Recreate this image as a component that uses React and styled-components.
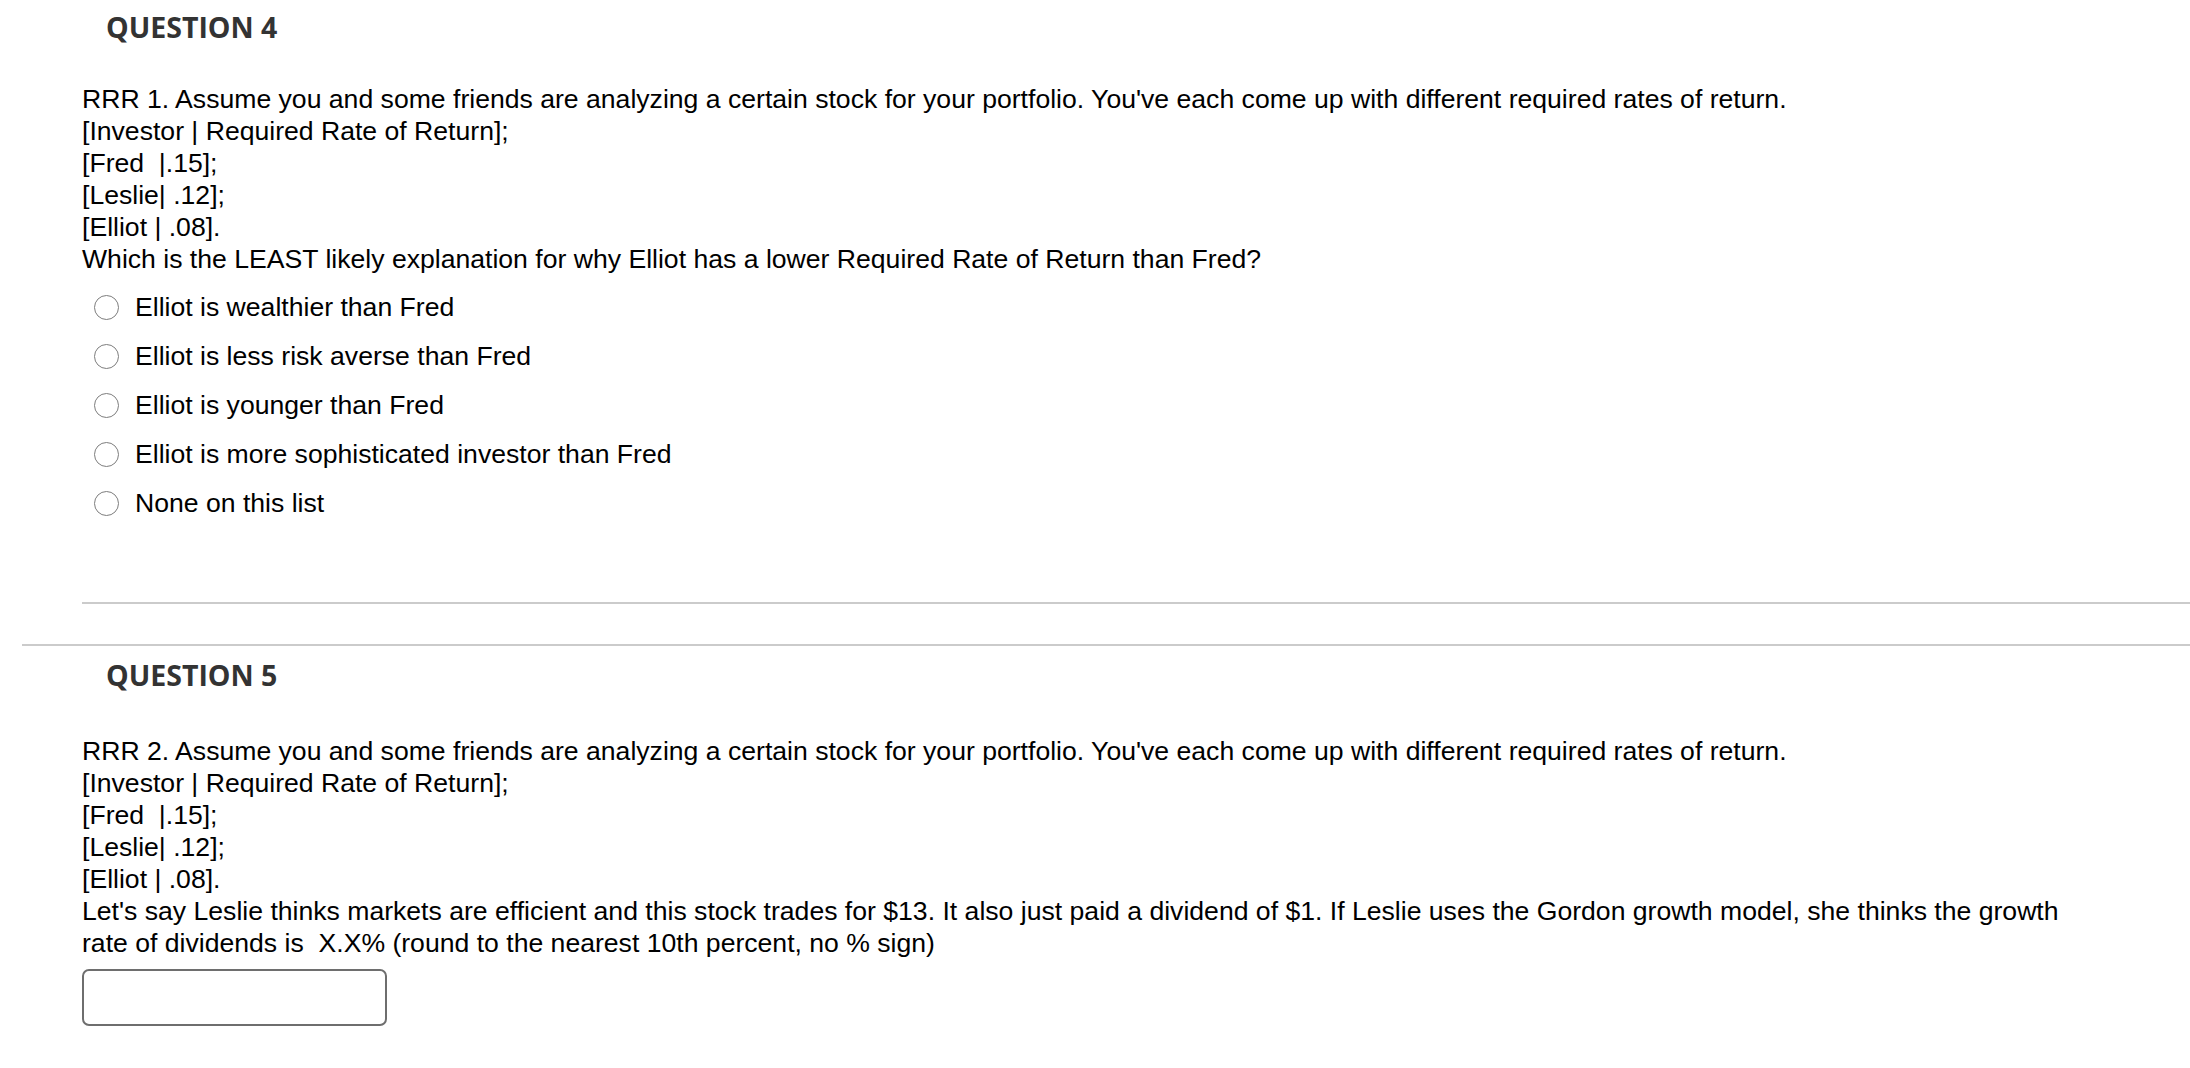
import React from "react";
import styled, { createGlobalStyle } from "styled-components";

const GlobalStyle = createGlobalStyle`
  html, body {
    margin: 0;
    padding: 0;
    background: #fff;
  }
  body {
    font-family: "Liberation Sans", Arial, sans-serif;
    color: #000;
  }
`;

const Page = styled.div`
  padding-left: 22px;
  margin-top: -4px;
`;

const Question = styled.section`
  border-top: 2px solid ${(p) => (p.$divider ? "#cbcbcb" : "transparent")};
  padding-top: 10px;
`;

const Title = styled.h2`
  margin: 0 0 0 84px;
  font-family: "Open Sans", sans-serif;
  font-weight: 700;
  font-size: 28.5px;
  line-height: 38px;
  color: #333;
`;

const Body = styled.div`
  margin: ${(p) => p.$gap || 37}px 0 0 60px;
`;

const Text = styled.p`
  margin: 0;
  padding-right: 105px;
  font-size: 26.6px;
  line-height: 32px;
`;

const Options = styled.ul`
  list-style: none;
  margin: 7.5px 0 0;
  padding: 0 0 0 12px;
`;

const Option = styled.li`
  display: flex;
  align-items: center;
  gap: 16px;
  height: 49px;
  font-size: 26.6px;
`;

const Radio = styled.input.attrs({ type: "radio" })`
  appearance: none;
  margin: 0;
  width: 25px;
  height: 25px;
  border: 1.5px solid #7d7d7d;
  border-radius: 50%;
  background: #fff;
  flex-shrink: 0;
`;

const Rule = styled.hr`
  border: none;
  height: 2px;
  background: #cbcbcb;
  margin: 74.5px 0 40px;
`;

const Answer = styled.input.attrs({ type: "text" })`
  display: block;
  box-sizing: border-box;
  width: 305px;
  height: 57px;
  margin-top: 10px;
  border: 2px solid #6e6e6e;
  border-radius: 7px;
  font-size: 24px;
  font-family: inherit;
  outline: none;
`;

const prompt = (
  <>
    You've each come up with different required rates of return.
    <br />
    [Investor | Required Rate of Return];
    <br />
    [Fred&nbsp; |.15];
    <br />
    [Leslie| .12];
    <br />
    [Elliot | .08].
  </>
);

const choices = [
  "Elliot is wealthier than Fred",
  "Elliot is less risk averse than Fred",
  "Elliot is younger than Fred",
  "Elliot is more sophisticated investor than Fred",
  "None on this list",
];

export default function App() {
  return (
    <>
      <GlobalStyle />
      <Page>
        <Question>
          <Title>QUESTION 4</Title>
          <Body>
            <Text>
              RRR 1. Assume you and some friends are analyzing a certain stock for your portfolio. {prompt}
              <br />
              Which is the LEAST likely explanation for why Elliot has a lower Required Rate of Return than Fred?
            </Text>
            <Options>
              {choices.map((c) => (
                <Option key={c}>
                  <Radio name="q4" />
                  <span>{c}</span>
                </Option>
              ))}
            </Options>
            <Rule />
          </Body>
        </Question>
        <Question $divider>
          <Title>QUESTION 5</Title>
          <Body $gap={41}>
            <Text>
              RRR 2. Assume you and some friends are analyzing a certain stock for your portfolio. {prompt}
              <br />
              Let's say Leslie thinks markets are efficient and this stock trades for $13. It also just paid a dividend of $1. If Leslie uses the Gordon growth model, she thinks the growth rate of dividends is&nbsp; X.X% (round to the nearest 10th percent, no % sign)
            </Text>
            <Answer />
          </Body>
        </Question>
      </Page>
    </>
  );
}
